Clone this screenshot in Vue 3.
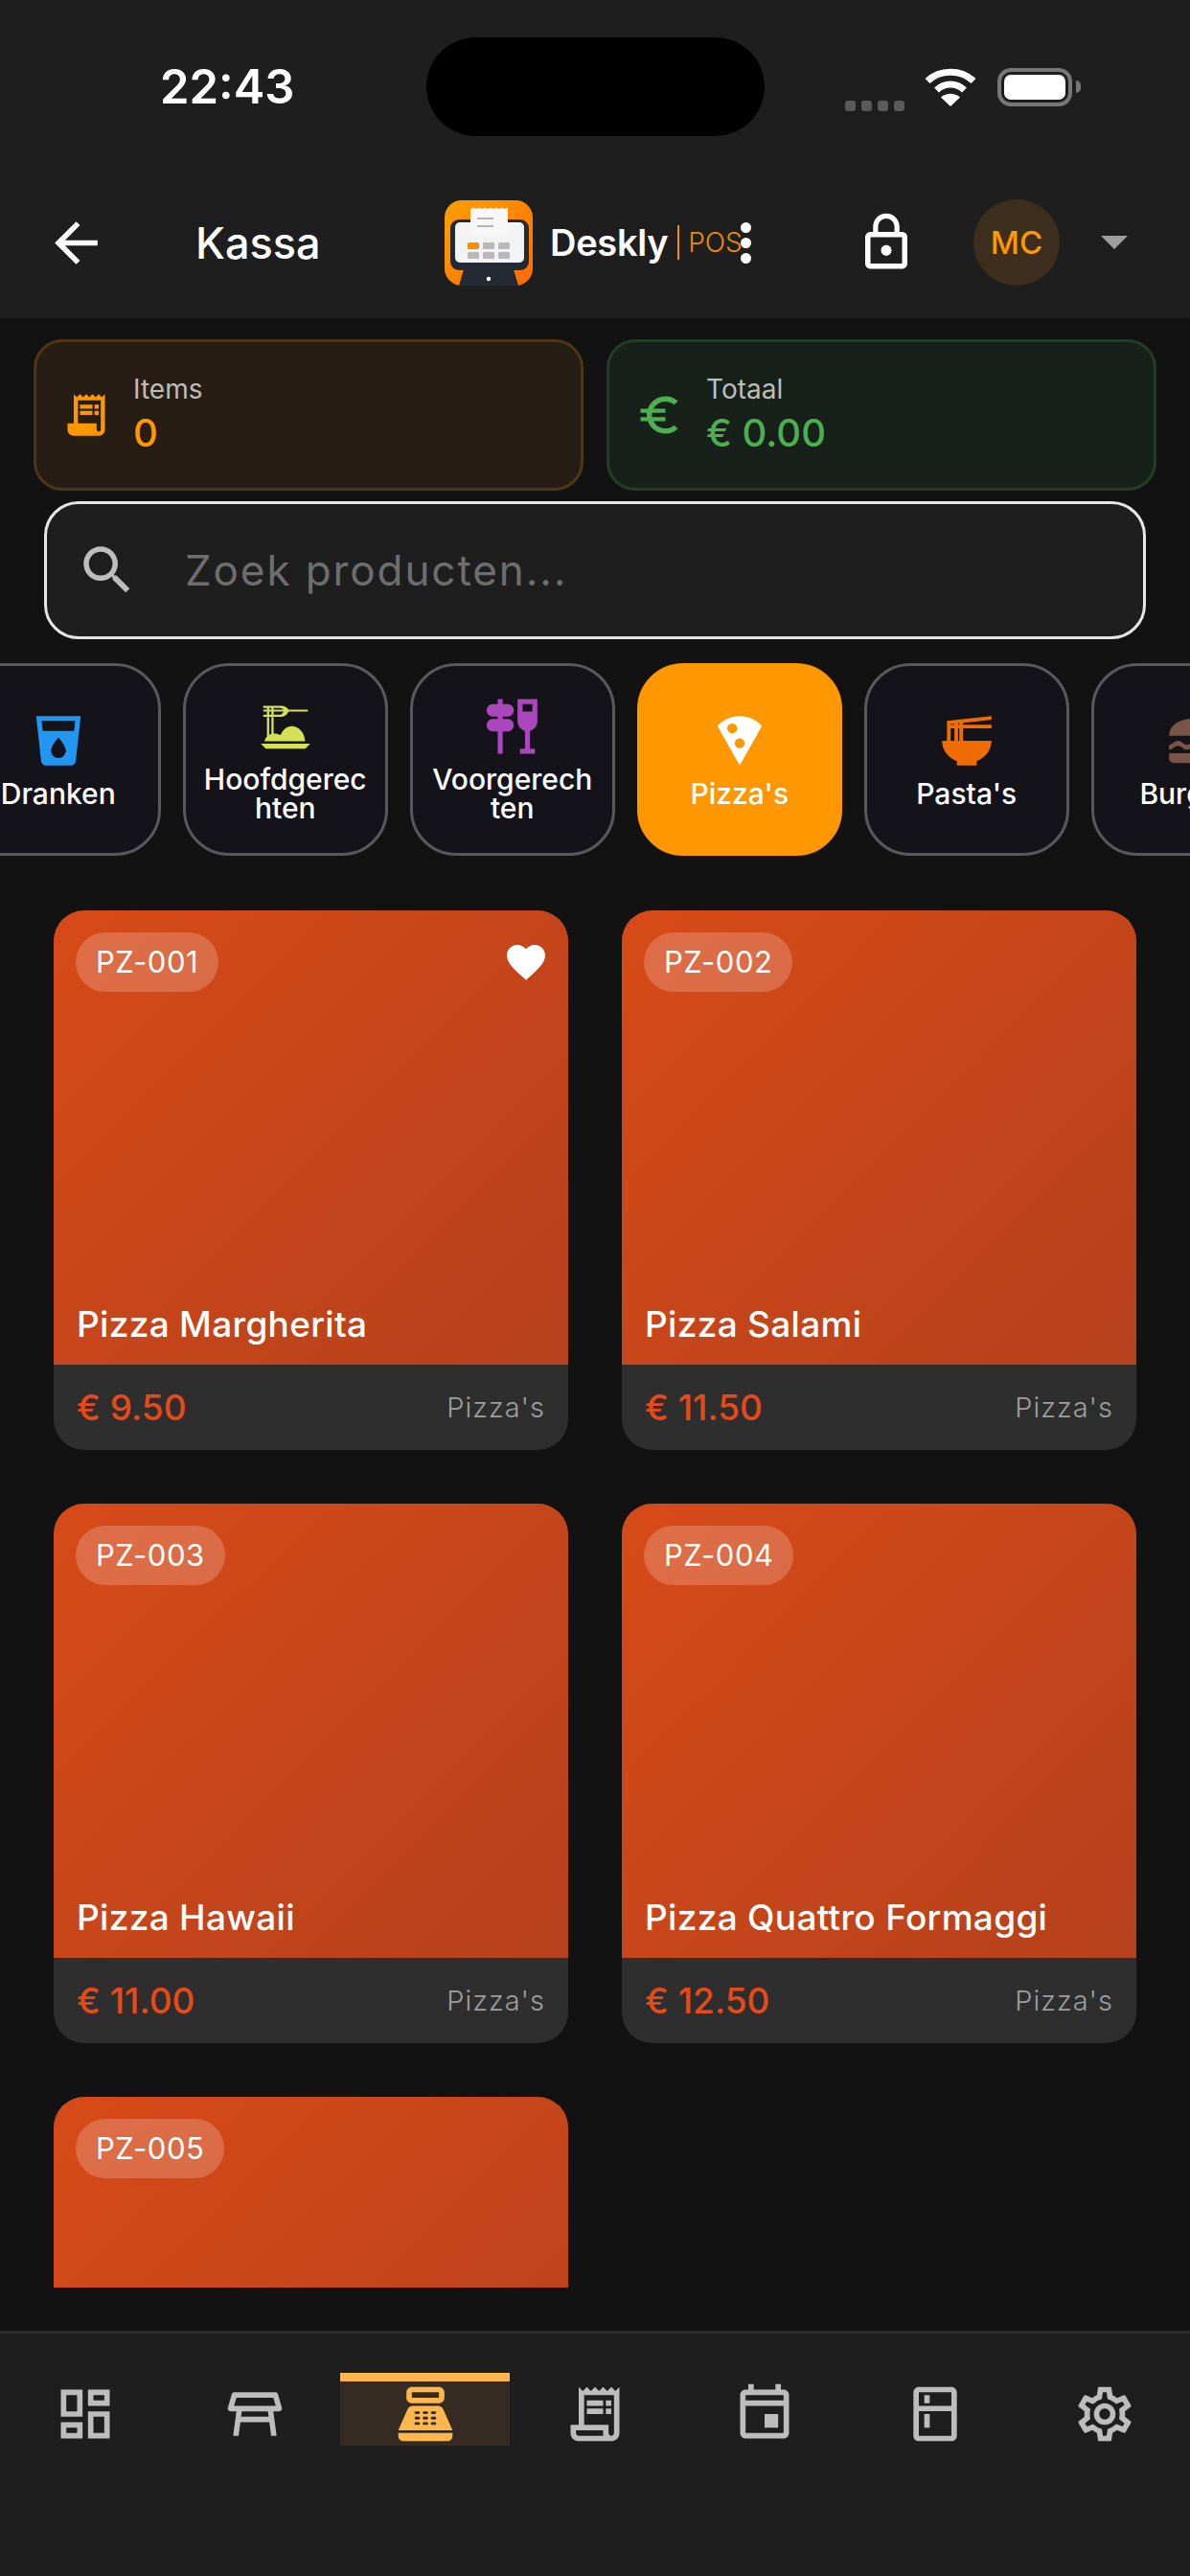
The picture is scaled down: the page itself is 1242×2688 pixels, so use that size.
<template>
  <div class="page">
    <header class="top">
      <div class="status">
        <span class="time">22:43</span>
        <div class="island"></div>
        <div class="signal">
          <i v-for="n in 4" :key="n"></i>
        </div>
        <svg class="wifi" viewBox="0 0 54 40">
          <path d="M3 13.5C16 1 38 1 51 13.5" fill="none" stroke="#fff" stroke-width="7" />
          <path d="M12.5 23C21 15 33 15 41.5 23" fill="none" stroke="#fff" stroke-width="7" />
          <path d="M27 40 17 30.5c6-5 14-5 20 0z" fill="#fff" />
        </svg>
        <div class="battery"><div class="charge"></div></div>
        <div class="tip"></div>
      </div>

      <div class="bar">
        <svg class="back" viewBox="0 0 24 24"><path :d="icons.back" /></svg>
        <span class="title">Kassa</span>
        <div class="logo-group">
          <svg class="logo" viewBox="0 0 92 89">
            <defs>
              <linearGradient id="logoBg" x1="0" y1="0" x2="1" y2="1">
                <stop offset="0" stop-color="#ffa000" />
                <stop offset="1" stop-color="#ff6a00" />
              </linearGradient>
            </defs>
            <rect width="92" height="89" rx="18" fill="url(#logoBg)" />
            <path d="M20 72h52l5 17H15z" fill="#232a33" />
            <circle cx="46" cy="82" r="2.2" fill="#fff" />
            <rect x="6" y="20" width="82" height="53" rx="9" fill="#232a33" />
            <rect x="11" y="23" width="72" height="42" rx="5" fill="#f3f3f3" />
            <path d="M27 9l3.2-1.5L33 9l3-1.5L39 9l3-1.5L45 9l3-1.5L51 9l3-1.5L57 9l3-1.5L63 9l3-1.5V37H27z" fill="#f7f7f7" />
            <rect x="34" y="18" width="17" height="2" fill="#b5b5b8" />
            <rect x="34" y="26" width="17" height="2" fill="#b5b5b8" />
            <rect x="24" y="44" width="12" height="7" rx="1.5" fill="#fb8c00" />
            <rect x="40" y="44" width="12" height="7" rx="1.5" fill="#b8b8bc" />
            <rect x="56" y="44" width="12" height="7" rx="1.5" fill="#b8b8bc" />
            <rect x="24" y="54" width="12" height="7" rx="1.5" fill="#b8b8bc" />
            <rect x="40" y="54" width="12" height="7" rx="1.5" fill="#b8b8bc" />
            <rect x="56" y="54" width="12" height="7" rx="1.5" fill="#b8b8bc" />
          </svg>
          <span class="brand">Deskly</span>
          <span class="pipe"></span>
          <span class="pos">POS</span>
          <div class="more"><i></i><i></i><i></i></div>
        </div>
        <svg class="lock" viewBox="0 0 24 24"><path :d="icons.lock" /></svg>
        <div class="avatar">MC</div>
        <div class="caret"></div>
      </div>
    </header>

    <section class="totals">
      <div class="total orange">
        <svg viewBox="0 0 24 24"><path fill-rule="evenodd" :d="icons.receiptFilled" /></svg>
        <div>
          <div class="label">Items</div>
          <div class="value">0</div>
        </div>
      </div>
      <div class="total green">
        <svg viewBox="0 0 24 24"><path :d="icons.euro" /></svg>
        <div>
          <div class="label">Totaal</div>
          <div class="value">€ 0.00</div>
        </div>
      </div>
    </section>

    <div class="search">
      <svg viewBox="0 0 24 24"><path :d="icons.search" /></svg>
      <span>Zoek producten...</span>
    </div>

    <div class="chips">
      <div
        v-for="cat in categories"
        :key="cat.name"
        class="chip"
        :class="{ active: cat.active }"
      >
        <svg viewBox="0 0 24 24"><path fill-rule="evenodd" :fill="cat.color" :d="cat.icon" /></svg>
        <span>{{ cat.name }}</span>
      </div>
    </div>

    <main class="products">
      <article v-for="p in products" :key="p.code" class="card">
        <div class="art">
          <div class="art-top">
            <span class="code">{{ p.code }}</span>
            <svg v-if="p.fav" class="heart" viewBox="0 0 24 24"><path :d="icons.heart" /></svg>
          </div>
          <div v-if="p.name" class="name">{{ p.name }}</div>
        </div>
        <div v-if="p.price" class="info">
          <span class="price">€ {{ p.price }}</span>
          <span class="kind">Pizza's</span>
        </div>
      </article>
    </main>

    <nav class="tabs">
      <div v-for="tab in tabs" :key="tab.id" class="tab" :class="{ on: tab.on }">
        <div class="tab-box">
          <svg viewBox="0 0 24 24"><path fill-rule="evenodd" :d="tab.icon" /></svg>
        </div>
      </div>
    </nav>
  </div>
</template>

<script setup>
const icons = {
  back: 'M20 11H7.83l5.59-5.59L12 4l-8 8 8 8 1.41-1.41L7.83 13H20v-2z',
  lock: 'M12 17c1.1 0 2-.9 2-2s-.9-2-2-2-2 .9-2 2 .9 2 2 2zm6-9h-1V6c0-2.76-2.24-5-5-5S7 3.24 7 6v2H6c-1.1 0-2 .9-2 2v10c0 1.1.9 2 2 2h12c1.1 0 2-.9 2-2V10c0-1.1-.9-2-2-2zM8.9 6c0-1.71 1.39-3.1 3.1-3.1s3.1 1.39 3.1 3.1v2H8.9V6zM18 20H6V10h12v10z',
  search: 'M15.5 14h-.79l-.28-.27C15.41 12.59 16 11.11 16 9.5 16 5.91 13.09 3 9.5 3S3 5.91 3 9.5 5.91 16 9.5 16c1.61 0 3.09-.59 4.23-1.57l.27.28v.79l5 4.99L20.49 19l-4.99-5zm-6 0C7.01 14 5 11.99 5 9.5S7.01 5 9.5 5 14 7.01 14 9.5 11.99 14 9.5 14z',
  euro: 'M15 18.5c-2.51 0-4.68-1.42-5.76-3.5H15v-2H8.58c-.05-.33-.08-.66-.08-1s.03-.67.08-1H15V9H9.24C10.32 6.92 12.5 5.5 15 5.5c1.61 0 3.09.59 4.23 1.57L21 5.3C19.41 3.87 17.3 3 15 3c-3.92 0-7.24 2.51-8.48 6H3v2h3.06c-.04.33-.06.66-.06 1s.02.67.06 1H3v2h3.52c1.24 3.49 4.56 6 8.48 6 2.31 0 4.41-.87 6-2.3l-1.78-1.77c-1.13.98-2.6 1.57-4.2 1.57z',
  heart: 'M12 21.35l-1.45-1.32C5.4 15.36 2 12.28 2 8.5 2 5.42 4.42 3 7.5 3c1.74 0 3.41.81 4.5 2.09C13.09 3.81 14.76 3 16.5 3 19.58 3 22 5.42 22 8.5c0 3.78-3.4 6.86-8.55 11.54L12 21.35z',
  receiptFilled: 'M19.5 3.5L18 2l-1.5 1.5L15 2l-1.5 1.5L12 2l-1.5 1.5L9 2 7.5 3.5 6 2v14H3v3c0 1.66 1.34 3 3 3h12c1.66 0 3-1.34 3-3V2l-1.5 1.5zM19 19c0 .55-.45 1-1 1s-1-.45-1-1v-3H8V5h11v14zM9 7h6v2H9zM16 7h2v2h-2zM9 10h6v2H9zM16 10h2v2h-2z'
}

const categories = [
  {
    name: 'Dranken',
    color: '#2196f3',
    icon: 'M3 2l2.01 18.23C5.13 21.23 5.97 22 7 22h10c1.03 0 1.87-.77 1.99-1.77L21 2H3zm9 17c-1.66 0-3-1.34-3-3 0-2 3-5.4 3-5.4s3 3.4 3 5.4c0 1.66-1.34 3-3 3zm6.33-11H5.67l-.44-4h13.53l-.43 4z'
  },
  {
    name: 'Hoofdgerechten',
    color: '#d4e157',
    icon: 'M2 19h20l-2 2H4zM3.5 18c.2-.8.6-1.4 1-1.9V8.2h.9v7.2c.3-.2.6-.3.9-.3V8.2h.9v6.7c.9-.1 1.9.1 2.8.6.9-2.2 2.4-3.6 4.4-3.6 3 0 5.3 2.6 5.5 6.1zM3 3.7h7.2c1.5 0 2.6.7 3 1.5H21v.8h-7.8c-.4 1-1.5 2.1-3 2.1H3v-.8h1.5V6H3v-.8h1.5V4.5H3zM5.4 4.5v.7h.9v-.7zM7.2 4.5v.7h3.9c-.3-.4-.7-.7-1.3-.7zM5.4 6v1.3h.9V6zM7.2 6v1.3h2.6c.6 0 1.1-.6 1.4-1.3z'
  },
  {
    name: 'Voorgerechten',
    color: '#ab47bc',
    icon: 'M22 10V1h-8v9c0 1.86 1.28 3.41 3 3.86V21h-2v2h6v-2h-2v-7.14c1.72-.45 3-2 3-3.86zm-2-7v3h-4V3h4zm-7.5 8.5c0 1.38-1.12 2.5-2.5 2.5H8v9H6v-9H4c-1.38 0-2.5-1.12-2.5-2.5S2.62 9 4 9h2V8H4C2.62 8 1.5 6.88 1.5 5.5S2.62 3 4 3h2V1h2v2h2c1.38 0 2.5 1.12 2.5 2.5S11.38 8 10 8H8v1h2c1.38 0 2.5 1.12 2.5 2.5z'
  },
  {
    name: "Pizza's",
    color: '#fff',
    active: true,
    icon: 'M12 2C8.43 2 5.23 3.54 3.01 6L12 22l8.99-16C18.78 3.55 15.57 2 12 2zM7 7c0-1.1.9-2 2-2s2 .9 2 2-.9 2-2 2-2-.9-2-2zm5 8c-1.1 0-2-.9-2-2s.9-2 2-2 2 .9 2 2-.9 2-2 2z'
  },
  {
    name: "Pasta's",
    color: '#ef6c00',
    icon: 'M22 3.51V2L4 3.99V12H2c0 3.69 2.47 6.86 6 8.25V22h8v-1.75c3.53-1.39 6-4.56 6-8.25H10.5V7H22V5.5H10.5V4.78L22 3.51zM5.5 12V7H7v5H5.5zM7 5.5H5.5V5.34L7 5.17V5.5zM9 12H8.5V7H9v5zM9 5.5H8.5V4.95L9 4.89V5.5z'
  },
  {
    name: 'Burgers',
    color: '#795548',
    icon: 'M2 10C2 5.5 6.5 3 12 3s10 2.5 10 7zM2 13.6c1.4 0 2.1-1.6 3.6-1.6s2.2 1.6 3.6 1.6 2.2-1.6 3.6-1.6 2.2 1.6 3.6 1.6 2.2-1.6 3.6-1.6 1.6.6 2.4 1v2c-1 0-1.5-1-2.4-1s-2.2 1.6-3.6 1.6-2.2-1.6-3.6-1.6-2.2 1.6-3.6 1.6-2.2-1.6-3.6-1.6S3.4 15.6 2 15.6zM2 17h20v2c0 1.1-.9 2-2 2H4c-1.1 0-2-.9-2-2z'
  }
]

const products = [
  { code: 'PZ-001', name: 'Pizza Margherita', price: '9.50', fav: true },
  { code: 'PZ-002', name: 'Pizza Salami', price: '11.50' },
  { code: 'PZ-003', name: 'Pizza Hawaii', price: '11.00' },
  { code: 'PZ-004', name: 'Pizza Quattro Formaggi', price: '12.50' },
  { code: 'PZ-005' }
]

const tabs = [
  { id: 'dashboard', icon: 'M19 5v2h-4V5h4M9 5v6H5V5h4m10 8v6h-4v-6h4M9 17v2H5v-2h4M21 3h-8v6h8V3zM11 3H3v10h8V3zm10 8h-8v10h8V11zm-10 4H3v6h8v-6z' },
  { id: 'tables', icon: 'M21.96 9.73l-1.43-5C20.41 4.3 20.02 4 19.57 4H4.43C3.98 4 3.59 4.3 3.47 4.73l-1.43 5C1.86 10.36 2.34 11 3 11h2.2L4 20h2l.67-5h10.67L18 20h2l-1.2-9H21c.66 0 1.14-.64.96-1.27zM6.93 13l.27-2h9.6l.27 2H6.93zM4.33 9l.86-3h13.63l.86 3H4.33z' },
  { id: 'pos', on: true, icon: 'M17 2H7c-1.1 0-2 .9-2 2v2c0 1.1.9 2 2 2h10c1.1 0 2-.9 2-2V4c0-1.1-.9-2-2-2zm0 4H7V4h10v2zm3 16H4c-1.1 0-2-.9-2-2v-1h20v1c0 1.1-.9 2-2 2zm-1.47-11.81C18.21 9.47 17.49 9 16.7 9H7.3c-.79 0-1.51.47-1.83 1.19L2 18h20l-3.47-7.81zM9.5 16h-1c-.28 0-.5-.22-.5-.5s.22-.5.5-.5h1c.28 0 .5.22.5.5s-.22.5-.5.5zm0-2h-1c-.28 0-.5-.22-.5-.5s.22-.5.5-.5h1c.28 0 .5.22.5.5s-.22.5-.5.5zm0-2h-1c-.28 0-.5-.22-.5-.5s.22-.5.5-.5h1c.28 0 .5.22.5.5s-.22.5-.5.5zm3 4h-1c-.28 0-.5-.22-.5-.5s.22-.5.5-.5h1c.28 0 .5.22.5.5s-.22.5-.5.5zm0-2h-1c-.28 0-.5-.22-.5-.5s.22-.5.5-.5h1c.28 0 .5.22.5.5s-.22.5-.5.5zm0-2h-1c-.28 0-.5-.22-.5-.5s.22-.5.5-.5h1c.28 0 .5.22.5.5s-.22.5-.5.5zm3 4h-1c-.28 0-.5-.22-.5-.5s.22-.5.5-.5h1c.28 0 .5.22.5.5s-.22.5-.5.5zm0-2h-1c-.28 0-.5-.22-.5-.5s.22-.5.5-.5h1c.28 0 .5.22.5.5s-.22.5-.5.5zm0-2h-1c-.28 0-.5-.22-.5-.5s.22-.5.5-.5h1c.28 0 .5.22.5.5s-.22.5-.5.5z' },
  { id: 'orders', icon: 'M19.5 3.5L18 2l-1.5 1.5L15 2l-1.5 1.5L12 2l-1.5 1.5L9 2 7.5 3.5 6 2v14H3v3c0 1.66 1.34 3 3 3h12c1.66 0 3-1.34 3-3V2l-1.5 1.5zM15 20H6c-.55 0-1-.45-1-1v-1h10v2zm4-1c0 .55-.45 1-1 1s-1-.45-1-1v-3H8V5h11v14zM9 7h6v2H9zM16 7h2v2h-2zM9 10h6v2H9zM16 10h2v2h-2z' },
  { id: 'agenda', icon: 'M19 3h-1V1h-2v2H8V1H6v2H5c-1.11 0-2 .9-2 2v14c0 1.1.89 2 2 2h14c1.1 0 2-.9 2-2V5c0-1.1-.9-2-2-2zm0 16H5V9h14v10zm0-12H5V5h14v2zM17 12h-5v5h5v-5z' },
  { id: 'stock', icon: 'M18 2.01L6 2c-1.1 0-2 .89-2 2v16c0 1.1.9 2 2 2h12c1.1 0 2-.9 2-2V4c0-1.11-.9-1.99-2-1.99zM18 20H6v-9.02h12V20zm0-11H6V4h12v5zM8 5h2v3H8zm0 7h2v5H8z' },
  { id: 'settings', icon: 'M19.43 12.98c.04-.32.07-.64.07-.98 0-.34-.03-.66-.07-.98l2.11-1.65c.19-.15.24-.42.12-.64l-2-3.46c-.09-.16-.26-.25-.44-.25-.06 0-.12.01-.17.03l-2.49 1c-.52-.4-1.08-.73-1.69-.98l-.38-2.65C14.46 2.18 14.25 2 14 2h-4c-.25 0-.46.18-.49.42l-.38 2.65c-.61.25-1.17.59-1.69.98l-2.49-1c-.06-.02-.12-.03-.18-.03-.17 0-.34.09-.43.25l-2 3.46c-.13.22-.07.49.12.64l2.11 1.65c-.04.32-.07.65-.07.98 0 .33.03.66.07.98l-2.11 1.65c-.19.15-.24.42-.12.64l2 3.46c.09.16.26.25.44.25.06 0 .12-.01.17-.03l2.49-1c.52.4 1.08.73 1.69.98l.38 2.65c.03.24.24.42.49.42h4c.25 0 .46-.18.49-.42l.38-2.65c.61-.25 1.17-.59 1.69-.98l2.49 1c.06.02.12.03.18.03.17 0 .34-.09.43-.25l2-3.46c.12-.22.07-.49-.12-.64l-2.11-1.65zm-1.98-1.71c.04.31.05.52.05.73 0 .21-.02.43-.05.73l-.14 1.13.89.7 1.08.84-.7 1.21-1.27-.51-1.04-.42-.9.68c-.43.32-.84.56-1.25.73l-1.06.43-.16 1.13-.2 1.35h-1.4l-.19-1.35-.16-1.13-1.06-.43c-.43-.18-.83-.41-1.23-.71l-.91-.7-1.06.43-1.27.51-.7-1.21 1.08-.84.89-.7-.14-1.13c-.03-.31-.05-.54-.05-.74s.02-.43.05-.73l.14-1.13-.89-.7-1.08-.84.7-1.21 1.27.51 1.04.42.9-.68c.43-.32.84-.56 1.25-.73l1.06-.43.16-1.13.2-1.35h1.39l.19 1.35.16 1.13 1.06.43c.43.18.83.41 1.23.71l.91.7 1.06-.43 1.27-.51.7 1.21-1.07.85-.89.7.14 1.13zM12 8c-2.21 0-4 1.79-4 4s1.79 4 4 4 4-1.79 4-4-1.79-4-4-4zm0 6c-1.1 0-2-.9-2-2s.9-2 2-2 2 .9 2 2-.9 2-2 2z' }
]
</script>

<style>
html,
body {
  margin: 0;
  background: #121212;
}
</style>

<style scoped>
.page {
  width: 1242px;
  height: 2688px;
  display: flex;
  flex-direction: column;
  overflow: hidden;
  background: #121212;
  color: #fff;
  font-family: Inter, "Noto Sans", sans-serif;
}

/* header */
.top {
  height: 332px;
  box-sizing: border-box;
  padding-top: 39px;
  background: #1e1e1e;
}
.status {
  display: flex;
  align-items: center;
  height: 103px;
  padding-left: 167px;
}
.time {
  width: 278px;
  font-size: 49px;
  font-weight: 600;
}
.island {
  width: 353px;
  height: 103px;
  border-radius: 52px;
  background: #000;
}
.signal {
  display: flex;
  gap: 6px;
  margin-left: 84px;
  margin-top: 39px;
}
.signal i {
  width: 11px;
  height: 11px;
  border-radius: 3px;
  background: #5a5a5a;
}
.wifi {
  width: 54px;
  height: 40px;
  margin-left: 21px;
}
.battery {
  box-sizing: border-box;
  width: 78px;
  height: 40px;
  margin-left: 22px;
  padding: 3px;
  border: 4px solid #777;
  border-radius: 14px;
}
.charge {
  height: 100%;
  border-radius: 7px;
  background: #fff;
}
.tip {
  width: 5px;
  height: 13px;
  margin-left: 4px;
  border-radius: 0 6px 6px 0;
  background: #777;
}
.bar {
  display: flex;
  align-items: center;
  height: 90px;
  margin-top: 66px;
  padding-left: 46px;
}
.back {
  width: 67px;
  height: 67px;
  fill: #fff;
}
.title {
  width: 260px;
  margin-left: 91px;
  font-size: 45px;
  font-weight: 500;
}
.logo-group {
  display: flex;
  align-items: center;
  width: 324px;
}
.logo {
  width: 92px;
  height: 89px;
  flex: none;
}
.brand {
  margin-left: 18px;
  font-size: 38px;
  font-weight: 600;
  letter-spacing: -0.3px;
}
.pipe {
  flex: none;
  width: 2px;
  height: 36px;
  margin-left: 10px;
  background: #f08c00;
}
.pos {
  margin-left: 9px;
  color: #f08c00;
  font-size: 28px;
  font-weight: 300;
}
.more {
  flex: none;
  display: flex;
  flex-direction: column;
  gap: 5px;
  margin-left: -2px;
}
.more i {
  width: 11px;
  height: 11px;
  border-radius: 50%;
  background: #fff;
}
.lock {
  width: 66px;
  height: 66px;
  margin-left: 104px;
  fill: #fff;
}
.avatar {
  display: flex;
  align-items: center;
  justify-content: center;
  width: 90px;
  height: 90px;
  margin-left: 58px;
  border-radius: 50%;
  background: #3e2e1d;
  color: #ff9800;
  font-size: 33px;
  font-weight: 500;
}
.caret {
  width: 0;
  height: 0;
  margin-left: 43px;
  border-left: 14px solid transparent;
  border-right: 14px solid transparent;
  border-top: 14px solid #9e9e9e;
}

/* totals */
.totals {
  display: flex;
  gap: 24px;
  margin: 22px 35px 0;
}
.total {
  flex: 1;
  display: flex;
  align-items: center;
  gap: 23px;
  box-sizing: border-box;
  height: 158px;
  padding-left: 26px;
  border: 3px solid;
  border-radius: 30px;
}
.total svg {
  width: 52px;
  height: 52px;
}
.orange {
  background: #261e14;
  border-color: #4f3716;
  color: #ff9800;
  fill: #ff9800;
}
.green {
  background: #18201a;
  border-color: #243d26;
  color: #4caf50;
  fill: #4caf50;
}
.label {
  color: #bdbdbd;
  font-size: 28px;
  line-height: 34px;
}
.value {
  margin-top: 4px;
  font-size: 40px;
  font-weight: 500;
  line-height: 50px;
}

/* search */
.search {
  display: flex;
  align-items: center;
  box-sizing: border-box;
  height: 144px;
  margin: 11px 46px 0;
  padding-left: 30px;
  border: 3px solid #e6e6e6;
  border-radius: 36px;
  background: #1e1e1e;
}
.search svg {
  width: 66px;
  height: 66px;
  fill: #bdbdbd;
}
.search span {
  margin-left: 48px;
  color: #6e6e6e;
  font-size: 44px;
  letter-spacing: 1.9px;
}

/* category chips */
.chips {
  display: flex;
  gap: 23.5px;
  margin: 25px 0 0 -46px;
}
.chip {
  flex: none;
  display: flex;
  flex-direction: column;
  align-items: center;
  justify-content: center;
  gap: 9px;
  box-sizing: border-box;
  width: 213.5px;
  height: 201px;
  padding: 0 17px;
  border: 3px solid #59585d;
  border-radius: 48px;
  background: #14131a;
}
.chip.active {
  border-color: #ff9800;
  background: #ff9800;
}
.chip svg {
  width: 62px;
  height: 62px;
  flex: none;
}
.chip span {
  width: 100%;
  font-size: 30px;
  font-weight: 500;
  line-height: 30px;
  text-align: center;
  word-break: break-all;
}

/* products */
.products {
  display: grid;
  grid-template-columns: 537px 537px;
  grid-auto-rows: 563px;
  gap: 56px;
  height: 1437px;
  margin-top: 57px;
  padding: 0 56px;
  overflow: hidden;
}
.card {
  display: flex;
  flex-direction: column;
  border-radius: 32px;
  overflow: hidden;
  background: #2e2e2e;
}
.art {
  display: flex;
  flex-direction: column;
  justify-content: space-between;
  flex: none;
  box-sizing: border-box;
  height: 474px;
  padding: 23px 24px 20px;
  background: linear-gradient(135deg, #d84a18, #b5411c);
}
.art-top {
  display: flex;
  align-items: center;
  justify-content: space-between;
}
.code {
  height: 62px;
  margin-left: -1px;
  padding: 0 21px;
  border-radius: 31px;
  background: rgba(255, 255, 255, 0.2);
  font-size: 31px;
  font-weight: 400;
  letter-spacing: 0.5px;
  line-height: 62px;
}
.heart {
  width: 48px;
  height: 48px;
  margin-right: -4px;
  fill: #fff;
}
.name {
  font-size: 37px;
  font-weight: 500;
  letter-spacing: 0.3px;
}
.info {
  display: flex;
  flex: 1;
  align-items: center;
  justify-content: space-between;
  padding: 0 24px;
}
.price {
  color: #e64a19;
  font-size: 37px;
  font-weight: 500;
}
.kind {
  color: #9e9e9e;
  font-size: 29px;
  font-weight: 300;
  letter-spacing: 1px;
}

/* bottom navigation */
.tabs {
  display: flex;
  flex: none;
  box-sizing: border-box;
  height: 256px;
  margin-top: auto;
  padding-top: 41px;
  border-top: 3px solid #2c2c2c;
  background: #1e1e1e;
}
.tab {
  flex: 1;
  display: flex;
  justify-content: center;
}
.tab-box {
  display: flex;
  align-items: center;
  justify-content: center;
  box-sizing: border-box;
  width: 177px;
  height: 76px;
  border-top: 9px solid transparent;
  fill: #bdbdbd;
}
.tab-box svg {
  width: 68px;
  height: 68px;
}
.tab.on .tab-box {
  border-top-color: #ffb74d;
  background: #352b22;
  fill: #ffb74d;
}
</style>
